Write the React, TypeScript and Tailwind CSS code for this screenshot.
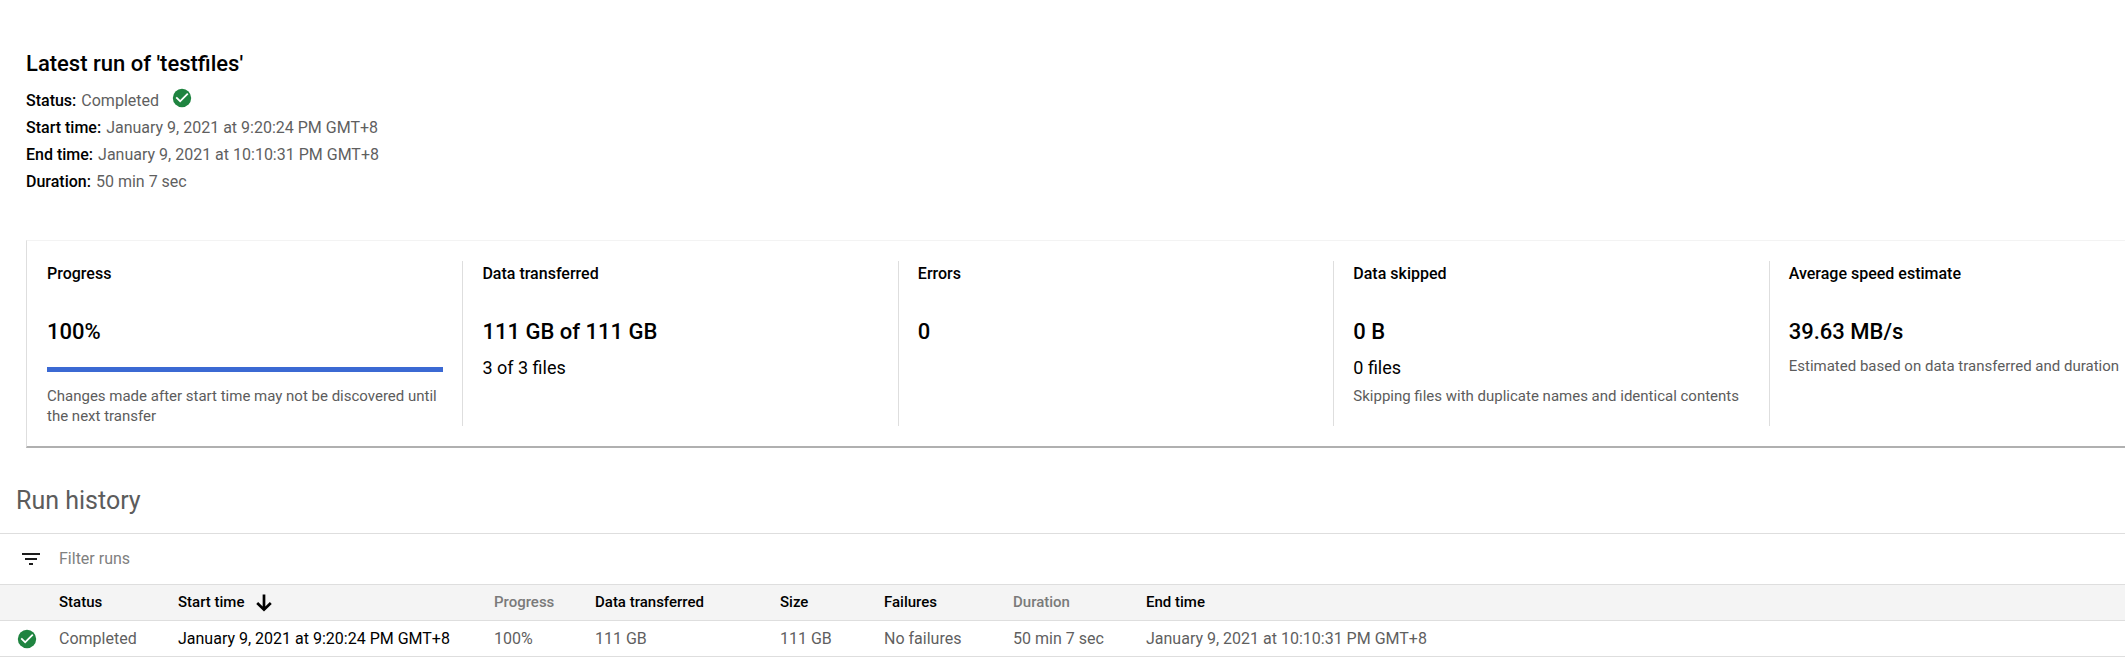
import React from "react";

function CheckCircle({ label }: { label: string }) {
  return (
    <svg viewBox="0 0 24 24" role="img" aria-label={label} className="size-[22px] shrink-0">
      <circle cx="12" cy="12" r="10" fill="#1f8440" />
      <path d="M10 14.17 6.4 10.6 5 12l5 5 9-9-1.4-1.42z" fill="#fff" />
    </svg>
  );
}

function FilterIcon() {
  return (
    <svg viewBox="0 0 24 24" aria-hidden="true" className="size-6 shrink-0 fill-[#1c1c1c]">
      <path d="M10 18h4v-2h-4v2zM3 6v2h18V6H3zm3 7h12v-2H6v2z" />
    </svg>
  );
}

function ArrowDown() {
  return (
    <svg viewBox="0 0 24 24" aria-hidden="true" className="size-6 shrink-0" fill="none" stroke="#000" strokeWidth="2.7">
      <path d="M12 3.5v15M5.2 12l6.8 6.6 6.8-6.6" />
    </svg>
  );
}

function Detail({ name, children }: { name: string; children: React.ReactNode }) {
  return (
    <div className="flex gap-[5px]">
      <dt className="font-medium text-black">{name}:</dt>
      <dd className="flex items-start gap-3">{children}</dd>
    </div>
  );
}

type StatProps = {
  title: string;
  value: string;
  files?: string;
  note?: string;
  progress?: number;
};

function Stat({ title, value, files, note, progress }: StatProps) {
  return (
    <section className="border-l border-[#dedede] px-[19px] first:border-l-0 first:pl-5 last:pr-0">
      <h3 className="pt-[3px] text-base leading-5 font-medium">{title}</h3>
      <p className="mt-[34px] text-[22px] leading-7 font-medium">{value}</p>
      {files && <p className="mt-[10px] text-lg leading-6">{files}</p>}
      {progress !== undefined && (
        <div role="progressbar" aria-label={title} aria-valuenow={progress} className="mt-[21px] mb-[14px] h-[5px]">
          <div className="h-full bg-[#3b69d3]" style={{ width: `${progress}%` }} />
        </div>
      )}
      {note && <p className={"text-[15px] leading-5 text-[#5c5c5c] " + (files ? "mt-[6px]" : progress === undefined ? "mt-[10px]" : "")}>{note}</p>}
    </section>
  );
}

const stats: StatProps[] = [
  { title: "Progress", value: "100%", progress: 100, note: "Changes made after start time may not be discovered until the next transfer" },
  { title: "Data transferred", value: "111 GB of 111 GB", files: "3 of 3 files" },
  { title: "Errors", value: "0" },
  { title: "Data skipped", value: "0 B", files: "0 files", note: "Skipping files with duplicate names and identical contents" },
  { title: "Average speed estimate", value: "39.63 MB/s", note: "Estimated based on data transferred and duration" },
];

export default function App() {
  return (
    <main className="bg-white pt-12 font-['Roboto',sans-serif] text-base text-black">
      <section className="px-[26px]">
        <h1 className="text-[22px] leading-8 font-medium">Latest run of 'testfiles'</h1>
        <dl className="mt-[7px] leading-[27px] text-[#5f5f5f]">
          <Detail name="Status">
            Completed
            <CheckCircle label="Success" />
          </Detail>
          <Detail name="Start time">January 9, 2021 at 9:20:24 PM GMT+8</Detail>
          <Detail name="End time">January 9, 2021 at 10:10:31 PM GMT+8</Detail>
          <Detail name="Duration">50 min 7 sec</Detail>
        </dl>
      </section>

      <div className="mt-[45px] ml-[26px] grid grid-cols-[repeat(4,11fr)_9fr] border-t border-b-2 border-l border-t-[#f3f3f3] border-b-[#b0b0b0] border-l-[#dedede] py-5">
        {stats.map((s) => (
          <Stat key={s.title} {...s} />
        ))}
      </div>

      <h2 className="px-4 pt-[37px] pb-4 text-[25px] leading-8 text-[#5c5c5c]">Run history</h2>

      <label className="flex h-[51px] items-center gap-4 border-t border-[#dedede] px-[19px]">
        <FilterIcon />
        <input type="text" placeholder="Filter runs" aria-label="Filter runs" className="flex-1 outline-none placeholder:text-[#808080]" />
      </label>

      <table className="w-full table-fixed border-collapse text-left">
        <colgroup>
          <col className="w-[59px]" />
          <col className="w-[119px]" />
          <col className="w-[316px]" />
          <col className="w-[101px]" />
          <col className="w-[185px]" />
          <col className="w-[104px]" />
          <col className="w-[129px]" />
          <col className="w-[133px]" />
          <col />
        </colgroup>
        <thead className="bg-[#f4f4f4] text-[15px]">
          <tr className="h-9 border-y border-[#dedede] *:font-medium">
            <td />
            <th scope="col">Status</th>
            <th scope="col" aria-sort="descending">
              <button type="button" className="flex items-center gap-2 font-medium">
                Start time
                <ArrowDown />
              </button>
            </th>
            <th scope="col" className="text-[#7a7a7a]">Progress</th>
            <th scope="col">Data transferred</th>
            <th scope="col">Size</th>
            <th scope="col">Failures</th>
            <th scope="col" className="text-[#7a7a7a]">Duration</th>
            <th scope="col">End time</th>
          </tr>
        </thead>
        <tbody className="text-[#5f5f5f]">
          <tr className="h-9 border-b border-[#dedede]">
            <td className="pl-4">
              <CheckCircle label="Success" />
            </td>
            <td>Completed</td>
            <td className="text-black">January 9, 2021 at 9:20:24 PM GMT+8</td>
            <td>100%</td>
            <td>111 GB</td>
            <td>111 GB</td>
            <td>No failures</td>
            <td>50 min 7 sec</td>
            <td>January 9, 2021 at 10:10:31 PM GMT+8</td>
          </tr>
        </tbody>
      </table>
    </main>
  );
}
